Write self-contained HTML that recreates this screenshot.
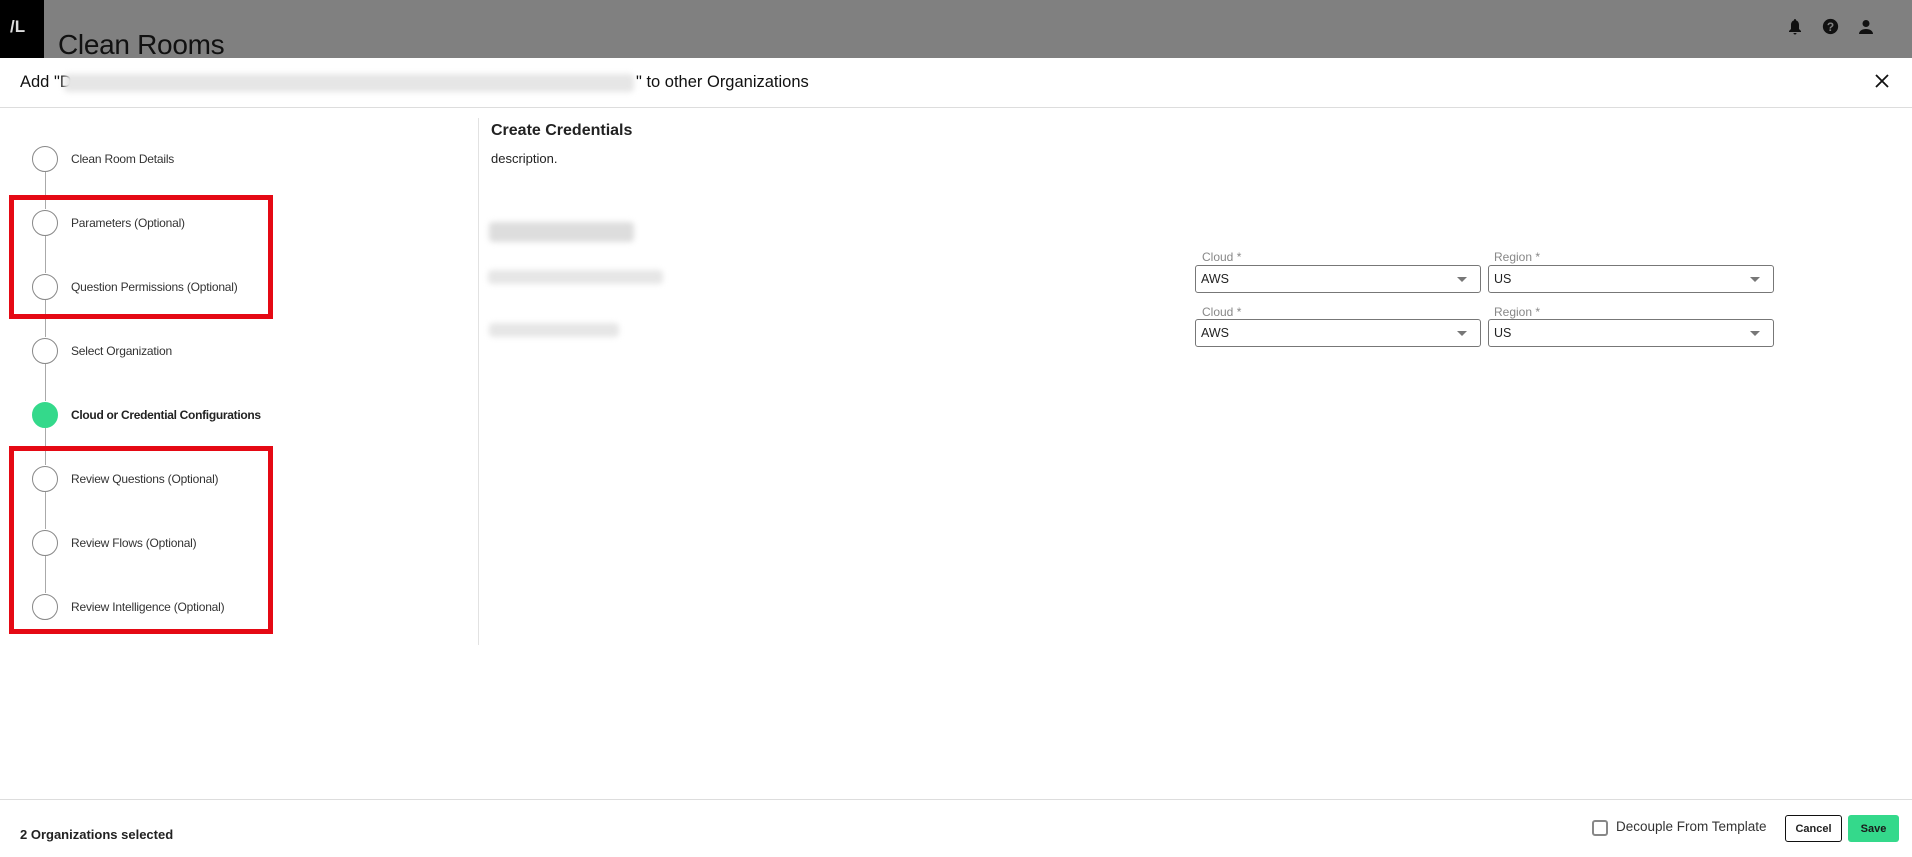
<!DOCTYPE html>
<html><head><meta charset="utf-8"><style>
*{margin:0;padding:0;box-sizing:border-box}
body{width:1912px;height:857px;position:relative;overflow:hidden;background:#fff;font-family:"Liberation Sans",sans-serif;color:#222}
.a{position:absolute}
.hdr{left:0;top:0;width:1912px;height:58px;background:#808080}
.logo{left:0;top:0;width:44px;height:58px;background:#000;color:#ddd;font-size:17px;font-weight:bold;padding:17px 0 0 10px}
.step{position:absolute;left:32px;width:26px;height:26px;border-radius:50%;border:1.3px solid #888;background:#fff}
.lbl{position:absolute;left:71px;font-size:12px;color:#333;line-height:16px;letter-spacing:-0.2px}
.ln{position:absolute;left:45px;width:1px;background:#aaa}
.red{position:absolute;border:5px solid #e50914}
.sel{position:absolute;height:28px;border:1px solid #777;border-radius:3px;font-size:12.5px;padding:6px 0 0 5px;color:#222}
.sel:after{content:"";position:absolute;right:13px;top:11px;border-left:5px solid transparent;border-right:5px solid transparent;border-top:5px solid #777}
.fl{position:absolute;font-size:12px;color:#888}
.blur{position:absolute;background:#e6e6e6;filter:blur(3px);border-radius:4px}
.btn{position:absolute;display:flex;align-items:center;justify-content:center;font-size:11px;font-weight:bold;border-radius:3px}
</style></head><body>
<div class="a hdr"></div>
<div class="a logo">/L</div>
<div class="a" style="left:58px;top:29px;font-size:28px;color:#111;letter-spacing:-0.3px">Clean Rooms</div>
<svg class="a" style="left:1787px;top:18px" width="16" height="18" viewBox="0 0 16 18"><path d="M8 1c-.7 0-1 .5-1 1v.4C4.9 3 4 4.8 4 7v4l-2 2v1h12v-1l-2-2V7c0-2.2-.9-4-3-4.6V2c0-.5-.3-1-1-1zM6.5 15a1.5 1.5 0 0 0 3 0z" fill="#111"/></svg>
<svg class="a" style="left:1822px;top:18px" width="17" height="17" viewBox="0 0 20 20"><circle cx="10" cy="10" r="9" fill="#111"/><text x="10" y="15" font-size="14" font-weight="bold" fill="#808080" text-anchor="middle" font-family="Liberation Sans">?</text></svg>
<svg class="a" style="left:1858px;top:19px" width="16" height="16" viewBox="0 0 16 16"><circle cx="8" cy="4.5" r="3.5" fill="#111"/><path d="M1 15c0-3 3-5 7-5s7 2 7 5z" fill="#111"/></svg>

<div class="a" style="left:20px;top:73px;font-size:16.5px;color:#111">Add "D</div>
<div class="blur" style="left:64px;top:74px;width:570px;height:18px"></div>
<div class="a" style="left:636px;top:73px;font-size:16.5px;color:#111">" to other Organizations</div>
<svg class="a" style="left:1874px;top:73px" width="16" height="16" viewBox="0 0 16 16"><path d="M2 2L14 14M14 2L2 14" stroke="#111" stroke-width="1.8"/></svg>
<div class="a" style="left:0;top:107px;width:1912px;height:1px;background:#ddd"></div>
<div class="a" style="left:478px;top:118px;width:1px;height:527px;background:#e2e2e2"></div>

<div class="ln" style="top:172px;height:37px"></div>
<div class="ln" style="top:236px;height:37px"></div>
<div class="ln" style="top:300px;height:37px"></div>
<div class="ln" style="top:364px;height:37px"></div>
<div class="ln" style="top:428px;height:37px"></div>
<div class="ln" style="top:492px;height:37px"></div>
<div class="ln" style="top:556px;height:37px"></div>

<div class="step" style="top:146px"></div><div class="lbl" style="top:151px">Clean Room Details</div>
<div class="step" style="top:210px"></div><div class="lbl" style="top:215px">Parameters (Optional)</div>
<div class="step" style="top:274px"></div><div class="lbl" style="top:279px">Question Permissions (Optional)</div>
<div class="step" style="top:338px"></div><div class="lbl" style="top:343px">Select Organization</div>
<div class="step" style="top:402px;background:#34d98b;border-color:#34d98b"></div><div class="lbl" style="top:407px;font-weight:bold;color:#222;letter-spacing:-0.3px">Cloud or Credential Configurations</div>
<div class="step" style="top:466px"></div><div class="lbl" style="top:471px">Review Questions (Optional)</div>
<div class="step" style="top:530px"></div><div class="lbl" style="top:535px">Review Flows (Optional)</div>
<div class="step" style="top:594px"></div><div class="lbl" style="top:599px">Review Intelligence (Optional)</div>

<div class="red" style="left:9px;top:195px;width:264px;height:124px"></div>
<div class="red" style="left:9px;top:446px;width:264px;height:188px"></div>

<div class="a" style="left:491px;top:122px;font-size:16px;font-weight:bold;color:#222">Create Credentials</div>
<div class="a" style="left:491px;top:151px;font-size:13px;color:#222">description.</div>
<div class="blur" style="left:489px;top:222px;width:145px;height:20px;background:#ddd"></div>
<div class="blur" style="left:488px;top:270px;width:175px;height:14px"></div>
<div class="blur" style="left:489px;top:323px;width:130px;height:14px"></div>

<div class="fl" style="left:1202px;top:250px">Cloud *</div>
<div class="fl" style="left:1494px;top:250px">Region *</div>
<div class="sel" style="left:1195px;top:265px;width:286px">AWS</div>
<div class="sel" style="left:1488px;top:265px;width:286px">US</div>
<div class="fl" style="left:1202px;top:305px">Cloud *</div>
<div class="fl" style="left:1494px;top:305px">Region *</div>
<div class="sel" style="left:1195px;top:319px;width:286px">AWS</div>
<div class="sel" style="left:1488px;top:319px;width:286px">US</div>

<div class="a" style="left:0;top:799px;width:1912px;height:1px;background:#ddd"></div>
<div class="a" style="left:20px;top:827px;font-size:13px;font-weight:bold;color:#222">2 Organizations selected</div>
<div class="a" style="left:1592px;top:820px;width:16px;height:16px;border:2px solid #888;border-radius:3px"></div>
<div class="a" style="left:1616px;top:819px;font-size:13.5px;color:#333">Decouple From Template</div>
<div class="btn" style="left:1785px;top:815px;width:57px;height:27px;border:1px solid #111">Cancel</div>
<div class="btn" style="left:1848px;top:815px;width:51px;height:27px;background:#34d98b;color:#1a1a1a">Save</div>
</body></html>
